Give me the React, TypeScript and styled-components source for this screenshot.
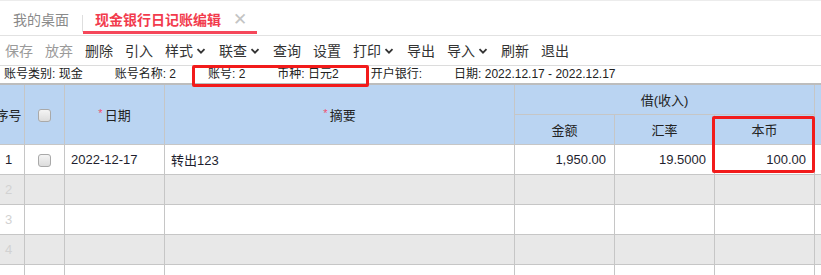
import { createGlobalStyle } from "styled-components";
import styled from "styled-components";

const GlobalStyle = createGlobalStyle`
  html, body {
    margin: 0;
    padding: 0;
    height: 100%;
    overflow: hidden;
    background: #fff;
  }
  body {
    font-family: "Liberation Sans", "Noto Sans CJK SC", sans-serif;
    color: #333;
  }
`;

const Page = styled.div`
  position: relative;
  width: 821px;
  height: 275px;
  overflow: hidden;
`;

const TabBar = styled.div`
  display: flex;
  align-items: flex-start;
  box-sizing: border-box;
  height: 36px;
  border-top: 1px solid #ececec;
  border-bottom: 1px solid #e2e2e2;
`;

const Tab = styled.div<{ $active?: boolean }>`
  display: flex;
  align-items: center;
  box-sizing: border-box;
  height: 33px;
  padding: 8px ${(p) => (p.$active ? "10px" : "13px")} 0 ${(p) => (p.$active ? "12px" : "13px")};
  font-size: 14px;
  line-height: 22px;
  font-weight: ${(p) => (p.$active ? 700 : 400)};
  color: ${(p) => (p.$active ? "#f23b4d" : "#8a8a8a")};
  border-bottom: 3px solid ${(p) => (p.$active ? "#f5475a" : "transparent")};
`;

const TabDivider = styled.div`
  width: 1px;
  height: 17px;
  margin-top: 14px;
  background: #dedede;
`;

const CloseMark = styled.span`
  margin-left: 12px;
  font-size: 17px;
  font-weight: 400;
  color: #c4c4c4;
`;

const Toolbar = styled.div`
  display: flex;
  align-items: center;
  height: 30px;
  padding-left: 5px;
  gap: 12px;
  border-bottom: 1px solid #dcdcdc;
  box-sizing: border-box;
`;

const ToolButton = styled.span<{ $disabled?: boolean }>`
  display: inline-flex;
  align-items: center;
  font-size: 14px;
  line-height: 20px;
  color: ${(p) => (p.$disabled ? "#9a9a9a" : "#333")};
  white-space: nowrap;
`;

const ChevronIcon = styled.svg`
  margin-left: 3px;
  margin-right: 1px;
`;

const Chevron = () => (
  <ChevronIcon width="10" height="10" viewBox="0 0 10 10">
    <path d="M1.5 3.2 L5 6.7 L8.5 3.2" fill="none" stroke="#333" strokeWidth="1.8" />
  </ChevronIcon>
);

const InfoRow = styled.div`
  display: flex;
  align-items: center;
  height: 17px;
  padding-left: 4px;
  gap: 32px;
  font-size: 12px;
  line-height: 17px;
  color: #222;
`;

const InfoItem = styled.span`
  white-space: nowrap;
`;

const TableWrap = styled.div`
  border-top: 2px solid #bdbdbd;
  overflow: hidden;
`;

const Grid = styled.table`
  table-layout: fixed;
  border-collapse: collapse;
  margin-left: -8px;
  width: 923px;
  font-size: 13px;
  color: #1e1e2e;
`;

const HeadCell = styled.th<{ $h?: number }>`
  background: #bad4f2;
  font-weight: 400;
  height: ${(p) => p.$h ?? 29}px;
  padding: 0;
  border: 1px solid #c6c6c6;
  border-top: none;
  text-align: center;
  color: #222;
  white-space: nowrap;
  overflow: hidden;
`;

const Star = styled.span`
  color: #f0506e;
  font-size: 11px;
  margin-right: 2px;
  vertical-align: 3px;
`;

const Row = styled.tr<{ $odd?: boolean }>`
  background: ${(p) => (p.$odd ? "#e8e8e8" : "#fff")};
`;

const Cell = styled.td<{ $align?: string; $muted?: boolean }>`
  height: 29px;
  padding: 0 ${(p) => (p.$align === "right" ? "8px" : "6px")};
  border: 1px solid #c6c6c6;
  text-align: ${(p) => p.$align ?? "left"};
  color: ${(p) => (p.$muted ? "#d2d2d2" : "#1e1e2e")};
  white-space: nowrap;
  overflow: hidden;
`;

const Check = styled.span`
  display: inline-block;
  width: 13px;
  height: 13px;
  box-sizing: border-box;
  border: 1.5px solid #a9a9a9;
  border-radius: 3px;
  background: linear-gradient(#f4f4f4, #dcdcdc);
  vertical-align: middle;
`;

const Highlight = styled.div<{ $x: number; $y: number; $w: number; $h: number }>`
  position: absolute;
  left: ${(p) => p.$x}px;
  top: ${(p) => p.$y}px;
  width: ${(p) => p.$w}px;
  height: ${(p) => p.$h}px;
  box-sizing: border-box;
  border: 3px solid #f21b1b;
  border-radius: 2px;
  pointer-events: none;
`;

const tools: { label: string; disabled?: boolean; menu?: boolean }[] = [
  { label: "保存", disabled: true },
  { label: "放弃", disabled: true },
  { label: "删除" },
  { label: "引入" },
  { label: "样式", menu: true },
  { label: "联查", menu: true },
  { label: "查询" },
  { label: "设置" },
  { label: "打印", menu: true },
  { label: "导出" },
  { label: "导入", menu: true },
  { label: "刷新" },
  { label: "退出" },
];

const rows = [
  { no: 1, date: "2022-12-17", memo: "转出123", amount: "1,950.00", rate: "19.5000", local: "100.00" },
  { no: 2 },
  { no: 3 },
  { no: 4 },
  { no: 5 },
];

export default function App() {
  return (
    <Page>
      <GlobalStyle />
      <TabBar>
        <Tab>我的桌面</Tab>
        <TabDivider />
        <Tab $active>
          现金银行日记账编辑
          <CloseMark>✕</CloseMark>
        </Tab>
      </TabBar>
      <Toolbar>
        {tools.map((t) => (
          <ToolButton key={t.label} $disabled={t.disabled}>
            {t.label}
            {t.menu && <Chevron />}
          </ToolButton>
        ))}
      </Toolbar>
      <InfoRow>
        <InfoItem>账号类别: 现金</InfoItem>
        <InfoItem>账号名称: 2</InfoItem>
        <InfoItem>账号: 2</InfoItem>
        <InfoItem>币种: 日元2</InfoItem>
        <InfoItem>开户银行: </InfoItem>
        <InfoItem>日期: 2022.12.17 - 2022.12.17</InfoItem>
      </InfoRow>
      <TableWrap>
        <Grid>
          <colgroup>
            <col style={{ width: 32 }} />
            <col style={{ width: 40 }} />
            <col style={{ width: 100 }} />
            <col style={{ width: 350 }} />
            <col style={{ width: 100 }} />
            <col style={{ width: 100 }} />
            <col style={{ width: 100 }} />
            <col style={{ width: 100 }} />
          </colgroup>
          <thead>
            <tr>
              <HeadCell rowSpan={2}>序号</HeadCell>
              <HeadCell rowSpan={2}>
                <Check />
              </HeadCell>
              <HeadCell rowSpan={2}>
                <Star>*</Star>日期
              </HeadCell>
              <HeadCell rowSpan={2}>
                <Star>*</Star>摘要
              </HeadCell>
              <HeadCell colSpan={3} $h={29}>
                借(收入)
              </HeadCell>
              <HeadCell rowSpan={2} />
            </tr>
            <tr>
              <HeadCell>金额</HeadCell>
              <HeadCell>汇率</HeadCell>
              <HeadCell>本币</HeadCell>
            </tr>
          </thead>
          <tbody>
            {rows.map((r, i) => (
              <Row key={r.no} $odd={i % 2 === 1}>
                <Cell $align="center" $muted={!r.date}>
                  {r.no}
                </Cell>
                <Cell $align="center">{r.date && <Check />}</Cell>
                <Cell>{r.date}</Cell>
                <Cell>{r.memo}</Cell>
                <Cell $align="right">{r.amount}</Cell>
                <Cell $align="right">{r.rate}</Cell>
                <Cell $align="right">{r.local}</Cell>
                <Cell />
              </Row>
            ))}
          </tbody>
        </Grid>
      </TableWrap>
      <Highlight $x={192} $y={65} $w={177} $h={22} />
      <Highlight $x={712} $y={116} $w={103} $h={57} />
    </Page>
  );
}
